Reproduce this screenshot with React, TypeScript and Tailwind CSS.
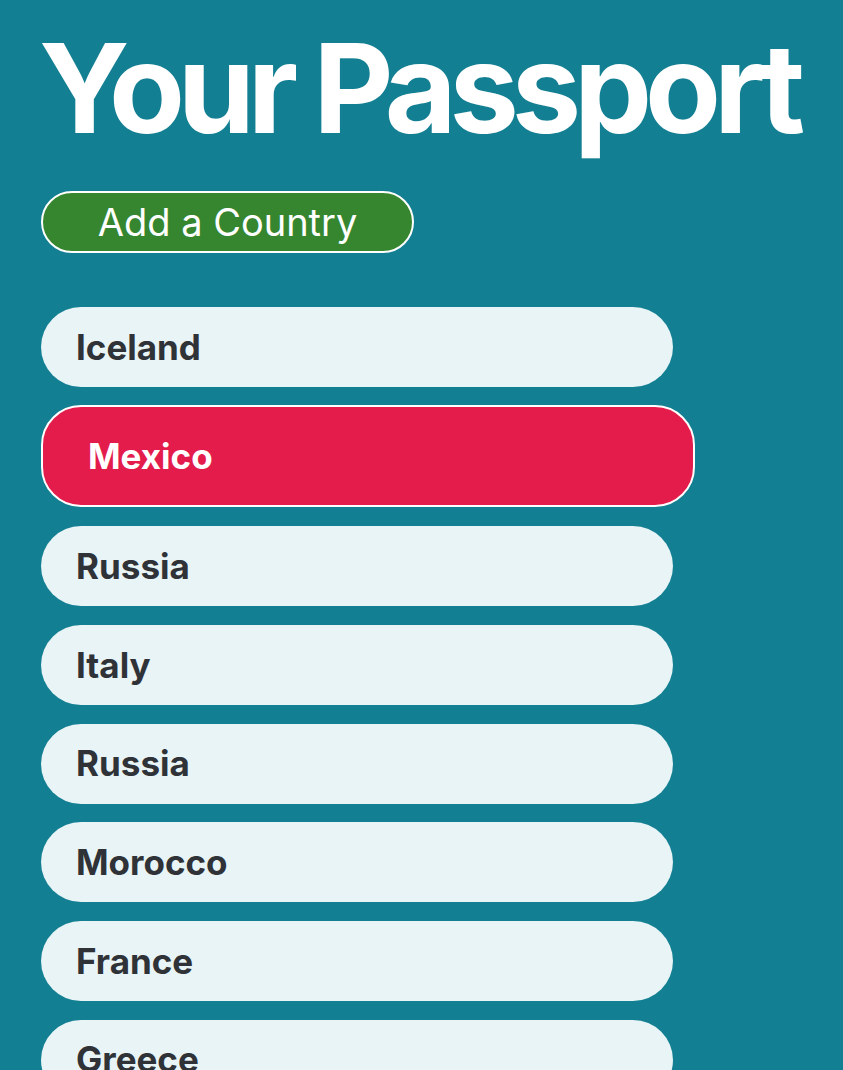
const COUNTRIES = [
  'Iceland',
  'Mexico',
  'Russia',
  'Italy',
  'Russia',
  'Morocco',
  'France',
  'Greece',
];

const SELECTED = 1;

function CountryItem({ name, selected }: { name: string; selected: boolean }) {
  if (selected) {
    return (
      <li className="flex items-center w-[654px] h-[102px] shrink-0 rounded-[40px] border-2 border-white bg-[#e31c4b] pl-[45px]">
        <span className="text-[35px] font-bold text-white">{name}</span>
      </li>
    );
  }
  return (
    <li className="flex items-center w-[632px] h-[80px] shrink-0 rounded-full bg-[#e8f4f6] pl-[35px]">
      <span className="text-[35px] font-bold text-[#2f3237]">{name}</span>
    </li>
  );
}

export default function App() {
  return (
    <div className="h-screen bg-[#137f92] font-['Inter',sans-serif] px-[41px] pt-[14px] overflow-hidden">
      <h1 className="text-[124px] font-bold text-white leading-[1.2] tracking-[-0.058em] -ml-[2px] whitespace-nowrap">
        Your Passport
      </h1>

      <button className="mt-[28px] w-[373px] h-[62px] rounded-full bg-[#36862f] border-2 border-white text-white text-[38px] leading-none">
        Add a Country
      </button>

      <ul className="mt-[54px] flex flex-col gap-[18.7px]">
        {COUNTRIES.map((c, i) => (
          <CountryItem key={i} name={c} selected={i === SELECTED} />
        ))}
      </ul>
    </div>
  );
}
